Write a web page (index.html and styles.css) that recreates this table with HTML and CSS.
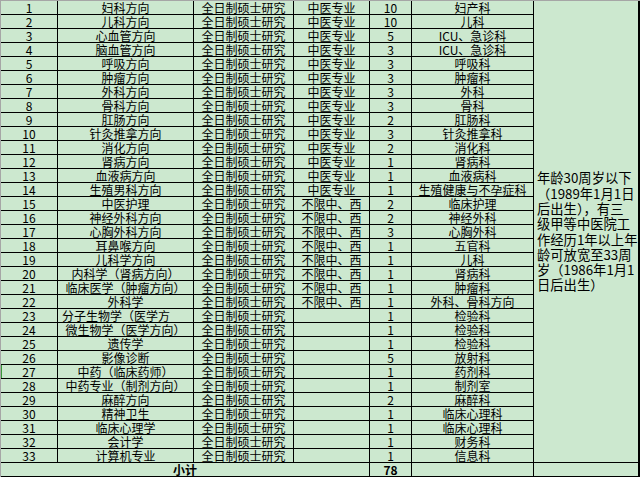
FILE: index.html
```html
<!DOCTYPE html>
<html lang="zh-CN">
<head>
<meta charset="utf-8">
<title>招聘计划</title>
<link rel="stylesheet" href="styles.css">
</head>
<body>
<table class="sheet">
<colgroup>
<col class="c-no"><col class="c-major"><col class="c-type"><col class="c-req"><col class="c-num"><col class="c-dept"><col class="c-note">
</colgroup>
<tbody>
<tr><td>1</td><td>妇科方向</td><td>全日制硕士研究</td><td>中医专业</td><td>10</td><td>妇产科</td>
<td class="note" rowspan="33">年龄30周岁以下<br>（1989年1月1日<br>后出生），有三<br>级甲等中医院工<br>作经历1年以上年<br>龄可放宽至33周<br>岁（1986年1月1<br>日后出生）</td></tr>
<tr><td>2</td><td>儿科方向</td><td>全日制硕士研究</td><td>中医专业</td><td>10</td><td>儿科</td></tr>
<tr><td>3</td><td>心血管方向</td><td>全日制硕士研究</td><td>中医专业</td><td>5</td><td>ICU、急诊科</td></tr>
<tr><td>4</td><td>脑血管方向</td><td>全日制硕士研究</td><td>中医专业</td><td>3</td><td>ICU、急诊科</td></tr>
<tr><td>5</td><td>呼吸方向</td><td>全日制硕士研究</td><td>中医专业</td><td>3</td><td>呼吸科</td></tr>
<tr><td>6</td><td>肿瘤方向</td><td>全日制硕士研究</td><td>中医专业</td><td>3</td><td>肿瘤科</td></tr>
<tr><td>7</td><td>外科方向</td><td>全日制硕士研究</td><td>中医专业</td><td>3</td><td>外科</td></tr>
<tr><td>8</td><td>骨科方向</td><td>全日制硕士研究</td><td>中医专业</td><td>3</td><td>骨科</td></tr>
<tr><td>9</td><td>肛肠方向</td><td>全日制硕士研究</td><td>中医专业</td><td>2</td><td>肛肠科</td></tr>
<tr><td>10</td><td>针灸推拿方向</td><td>全日制硕士研究</td><td>中医专业</td><td>3</td><td>针灸推拿科</td></tr>
<tr><td>11</td><td>消化方向</td><td>全日制硕士研究</td><td>中医专业</td><td>2</td><td>消化科</td></tr>
<tr><td>12</td><td>肾病方向</td><td>全日制硕士研究</td><td>中医专业</td><td>1</td><td>肾病科</td></tr>
<tr><td>13</td><td>血液病方向</td><td>全日制硕士研究</td><td>中医专业</td><td>1</td><td>血液病科</td></tr>
<tr><td>14</td><td>生殖男科方向</td><td>全日制硕士研究</td><td>中医专业</td><td>1</td><td>生殖健康与不孕症科</td></tr>
<tr><td>15</td><td>中医护理</td><td>全日制硕士研究</td><td>不限中、西</td><td>2</td><td>临床护理</td></tr>
<tr><td>16</td><td>神经外科方向</td><td>全日制硕士研究</td><td>不限中、西</td><td>2</td><td>神经外科</td></tr>
<tr><td>17</td><td>心胸外科方向</td><td>全日制硕士研究</td><td>不限中、西</td><td>3</td><td>心胸外科</td></tr>
<tr><td>18</td><td>耳鼻喉方向</td><td>全日制硕士研究</td><td>不限中、西</td><td>1</td><td>五官科</td></tr>
<tr><td>19</td><td>儿科学方向</td><td>全日制硕士研究</td><td>不限中、西</td><td>1</td><td>儿科</td></tr>
<tr><td>20</td><td>内科学（肾病方向）</td><td>全日制硕士研究</td><td>不限中、西</td><td>1</td><td>肾病科</td></tr>
<tr><td>21</td><td>临床医学（肿瘤方向）</td><td>全日制硕士研究</td><td>不限中、西</td><td>1</td><td>肿瘤科</td></tr>
<tr><td>22</td><td>外科学</td><td>全日制硕士研究</td><td>不限中、西</td><td>1</td><td>外科、骨科方向</td></tr>
<tr><td>23</td><td class="left">分子生物学（医学方</td><td>全日制硕士研究</td><td></td><td>1</td><td>检验科</td></tr>
<tr><td>24</td><td>微生物学（医学方向）</td><td>全日制硕士研究</td><td></td><td>1</td><td>检验科</td></tr>
<tr><td>25</td><td>遗传学</td><td>全日制硕士研究</td><td></td><td>1</td><td>检验科</td></tr>
<tr><td>26</td><td>影像诊断</td><td>全日制硕士研究</td><td></td><td>5</td><td>放射科</td></tr>
<tr class="active"><td>27</td><td>中药（临床药师）</td><td>全日制硕士研究</td><td></td><td>1</td><td>药剂科</td></tr>
<tr><td>28</td><td>中药专业（制剂方向）</td><td>全日制硕士研究</td><td></td><td>1</td><td>制剂室</td></tr>
<tr><td>29</td><td>麻醉方向</td><td>全日制硕士研究</td><td></td><td>2</td><td>麻醉科</td></tr>
<tr><td>30</td><td>精神卫生</td><td>全日制硕士研究</td><td></td><td>1</td><td>临床心理科</td></tr>
<tr><td>31</td><td>临床心理学</td><td>全日制硕士研究</td><td></td><td>1</td><td>临床心理科</td></tr>
<tr><td>32</td><td>会计学</td><td>全日制硕士研究</td><td></td><td>1</td><td>财务科</td></tr>
<tr><td>33</td><td>计算机专业</td><td>全日制硕士研究</td><td></td><td>1</td><td>信息科</td></tr>
<tr class="total"><td colspan="4">小计</td><td>78</td><td></td><td></td></tr>
</tbody>
</table>
</body>
</html>
```
FILE: styles.css
```css
html, body {
  margin: 0;
  padding: 0;
  background: #cce8cf;
}

.sheet {
  table-layout: fixed;
  border-collapse: separate;
  border-spacing: 0;
  width: 640px;
  border-top: 1px solid #a6a6a6;
  border-left: 1px solid #a6a6a6;
  font-family: "Noto Sans CJK SC", "Liberation Sans", sans-serif;
  font-size: 12px;
  color: #000;
  background: #cce8cf;
}

.c-no { width: 57px; }
.c-major { width: 136px; }
.c-type { width: 100px; }
.c-req { width: 76px; }
.c-num { width: 42px; }
.c-dept { width: 122px; }
.c-note { width: 106px; }

.sheet td {
  box-sizing: border-box;
  height: 14px;
  padding: 0;
  line-height: 13px;
  text-align: center;
  vertical-align: bottom;
  white-space: nowrap;
  border-right: 1px solid #000;
  border-bottom: 1px solid #000;
}

.sheet td.left {
  text-align: left;
  padding-left: 4px;
}

.sheet td.note {
  vertical-align: middle;
  text-align: left;
  white-space: normal;
  font-size: 13.3px;
  line-height: 15.3px;
  padding: 0 0 0 3px;
  border-right-width: 2px;
}

.active td:first-child {
  box-shadow: inset 1px 0 0 #3a9a3a;
}

.total td {
  font-weight: bold;
  border-right-width: 1px;
}

.total td:last-child {
  border-right-width: 2px;
}
```
